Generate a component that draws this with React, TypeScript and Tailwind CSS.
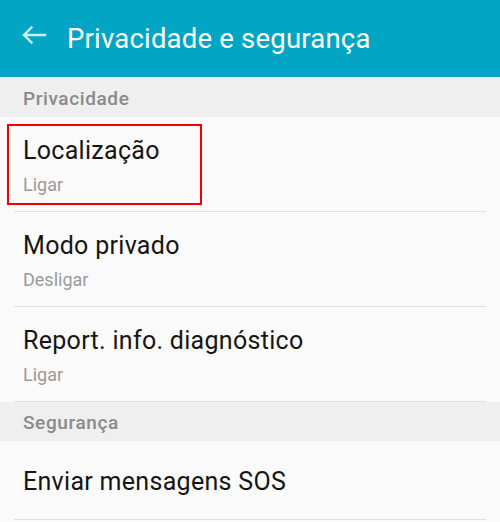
import React from "react";

const font = { fontFamily: "Roboto, 'Noto Sans', Arial, sans-serif" };

function Section({ label }: { label: string }) {
  return (
    <div className="h-[39px] bg-[#efefef] px-[23px] pt-[10px]">
      <div className="text-[19px] leading-[22px] font-medium tracking-[0.6px] text-[#8a8a8a]">{label}</div>
    </div>
  );
}

function Item({ title, sub, highlight }: { title: string; sub?: string; highlight?: boolean }) {
  return (
    <div className="relative">
      <div className={sub ? "h-[94px] px-[23px] pt-[20px]" : "h-[78px] px-[23px] pt-[27px]"}>
        <div className="text-[25px] leading-[28px] text-[#151515] tracking-[0.3px]">{title}</div>
        {sub && <div className="mt-[10px] text-[18px] leading-[20px] text-[#9a9a9a]">{sub}</div>}
      </div>
      <div className="mx-[14px] h-[1px] bg-[#e0e0e0]" />
      {highlight && (
        <div className="absolute left-[7px] top-[7px] w-[195px] h-[81px] border-2 border-[#f00000]" />
      )}
    </div>
  );
}

export default function App() {
  return (
    <div className="w-[500px] h-[522px] overflow-hidden bg-[#fafafa]" style={font}>
      <div className="h-[77px] bg-[#02a5c4] flex items-center">
        <svg width="67" height="77" viewBox="0 0 67 77" className="shrink-0">
          <path
            d="M45 35H24.5M31.5 27.5L24 35L31.5 42.5"
            fill="none"
            stroke="#c9f3f6"
            strokeWidth="2.4"
            strokeLinecap="square"
          />
        </svg>
        <div className="text-[27.5px] leading-[30px] tracking-[0.2px] text-white">Privacidade e segurança</div>
      </div>
      <div className="h-[1px] bg-[#dff1f4]" />
      <Section label="Privacidade" />
      <Item title="Localização" sub="Ligar" highlight />
      <Item title="Modo privado" sub="Desligar" />
      <Item title="Report. info. diagnóstico" sub="Ligar" />
      <Section label="Segurança" />
      <Item title="Enviar mensagens SOS" />
    </div>
  );
}
